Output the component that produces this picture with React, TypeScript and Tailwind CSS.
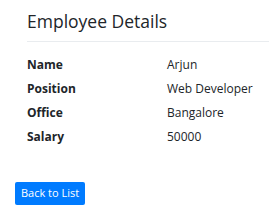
export default function App() {
  const rows = [
    ["Name", "Arjun"],
    ["Position", "Web Developer"],
    ["Office", "Bangalore"],
    ["Salary", "50000"],
  ];
  return (
    <div className="h-[214px] w-[269px] bg-white text-[#212529]" style={{ fontFamily: '"Segoe UI", "Open Sans", "Noto Sans", sans-serif' }}>
      <div className="pl-[27px] pt-[9px]">
        <h2 className="text-[17.5px] font-medium leading-[24px]">Employee Details</h2>
        <div className="mt-[8px] h-px bg-[#e9ecef]" />
        <dl className="mt-[11px] text-[12px]">
          {rows.map(([k, v]) => (
            <div key={k} className="flex h-[24px] items-center">
              <dt className="w-[140px] font-bold">{k}</dt>
              <dd>{v}</dd>
            </div>
          ))}
        </dl>
      </div>
      <div className="pl-[15px] pt-[30px]">
        <button className="h-[23px] rounded-[2px] bg-[#007bff] px-[6px] text-[11px] text-white">Back to List</button>
      </div>
    </div>
  );
}
